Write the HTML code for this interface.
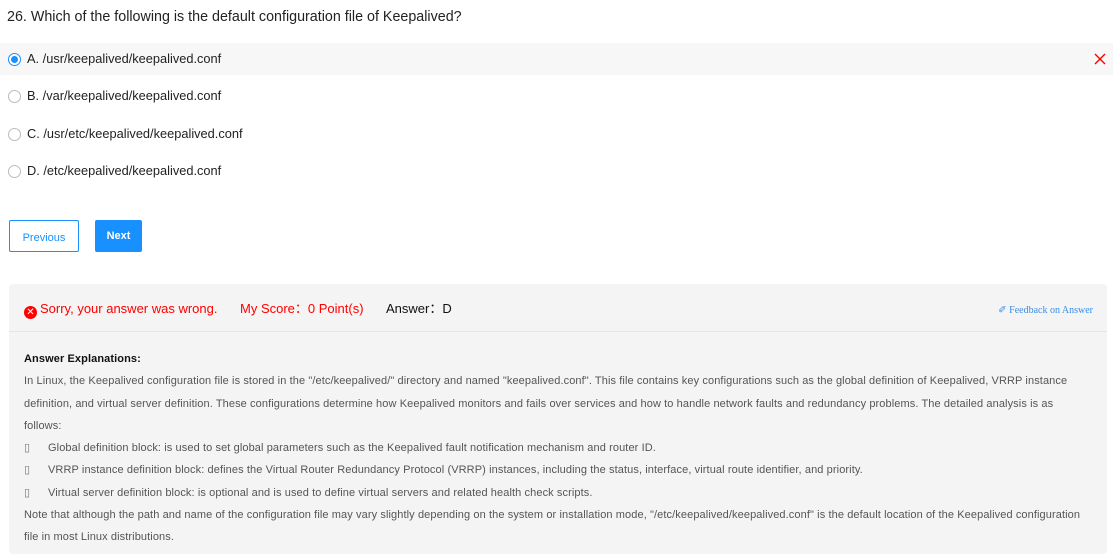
<!DOCTYPE html>
<html><head><meta charset="utf-8"><style>
*{margin:0;padding:0;box-sizing:border-box}
body{width:1113px;height:549px;overflow:hidden;background:#fff;font-family:"Liberation Sans",Arial,sans-serif;color:#222;position:relative}
.q{position:absolute;left:7px;top:9px;font-size:14.3px;color:#222}
.opt{position:absolute;left:0;width:1113px;height:32px;font-size:12.8px;line-height:32px;padding-left:27px}
.opt .r{position:absolute;left:8px;top:10px;width:13px;height:13px;border:1px solid #bbb;border-radius:50%;background:#fff}
.opt.sel{background:#f7f7f7}
.opt.sel .r{border-color:#1890ff}
.opt.sel .r:after{content:"";position:absolute;left:2px;top:2px;width:7px;height:7px;border-radius:50%;background:#1890ff}
.x{position:absolute;right:6px;top:9px;width:14px;height:14px}
.btn{position:absolute;top:220px;height:32px;font-size:11px;line-height:34px;text-align:center}
.box{position:absolute;left:9px;top:284px;width:1098px;height:270px;background:#f4f4f4;border-radius:4px}
.hd{height:48px;border-bottom:1px solid #e6e6e6;position:relative;font-size:13px}
.hd span{position:absolute;top:17px;line-height:16px}
.ex{padding:16px 15px 0 15px;font-size:11px;line-height:22.3px;color:#555;letter-spacing:0.1px}
.ex b{color:#111}
.ic{display:inline-block;width:10px;margin-right:14px;color:#777}
</style></head><body>
<div class="q">26. Which of the following is the default configuration file of Keepalived?</div>
<div class="opt sel" style="top:43px"><span class="r"></span>A. /usr/keepalived/keepalived.conf<svg class="x" viewBox="0 0 14 14"><path d="M2 2L12 12M12 2L2 12" stroke="#f00" stroke-width="1.4"/></svg></div>
<div class="opt" style="top:80px"><span class="r"></span>B. /var/keepalived/keepalived.conf</div>
<div class="opt" style="top:118px"><span class="r"></span>C. /usr/etc/keepalived/keepalived.conf</div>
<div class="opt" style="top:155px"><span class="r"></span>D. /etc/keepalived/keepalived.conf</div>
<div class="btn" style="left:9px;width:70px;border:1px solid #1890ff;color:#1890ff;border-radius:2px">Previous</div>
<div class="btn" style="left:95px;width:47px;background:#1890ff;color:#fff;font-weight:bold;border-radius:2px;line-height:32px">Next</div>
<div class="box">
<div class="hd">
<span style="left:15px;color:#f00"><i style="display:inline-block;width:13px;height:13px;border-radius:50%;background:#f00;color:#fff;font-style:normal;font-size:10px;line-height:13px;text-align:center;vertical-align:-2px;margin-right:3px">✕</i>Sorry, your answer was wrong.</span>
<span style="left:231px;color:#f00">My Score：0 Point(s)</span>
<span style="left:377px;color:#111">Answer：D</span>
<span style="right:14px;top:19px;font-family:'Liberation Serif',serif;font-size:10px;color:#3a8ee6">✐ Feedback on Answer</span>
</div>
<div class="ex">
<b>Answer Explanations:</b><br>
In Linux, the Keepalived configuration file is stored in the "/etc/keepalived/" directory and named "keepalived.conf". This file contains key configurations such as the global definition of Keepalived, VRRP instance definition, and virtual server definition. These configurations determine how Keepalived monitors and fails over services and how to handle network faults and redundancy problems. The detailed analysis is as<br>follows:<br>
<span class="ic">▯</span>Global definition block: is used to set global parameters such as the Keepalived fault notification mechanism and router ID.<br>
<span class="ic">▯</span>VRRP instance definition block: defines the Virtual Router Redundancy Protocol (VRRP) instances, including the status, interface, virtual route identifier, and priority.<br>
<span class="ic">▯</span>Virtual server definition block: is optional and is used to define virtual servers and related health check scripts.<br>
Note that although the path and name of the configuration file may vary slightly depending on the system or installation mode, "/etc/keepalived/keepalived.conf" is the default location of the Keepalived configuration<br>file in most Linux distributions.
</div>
</div>
</body></html>
